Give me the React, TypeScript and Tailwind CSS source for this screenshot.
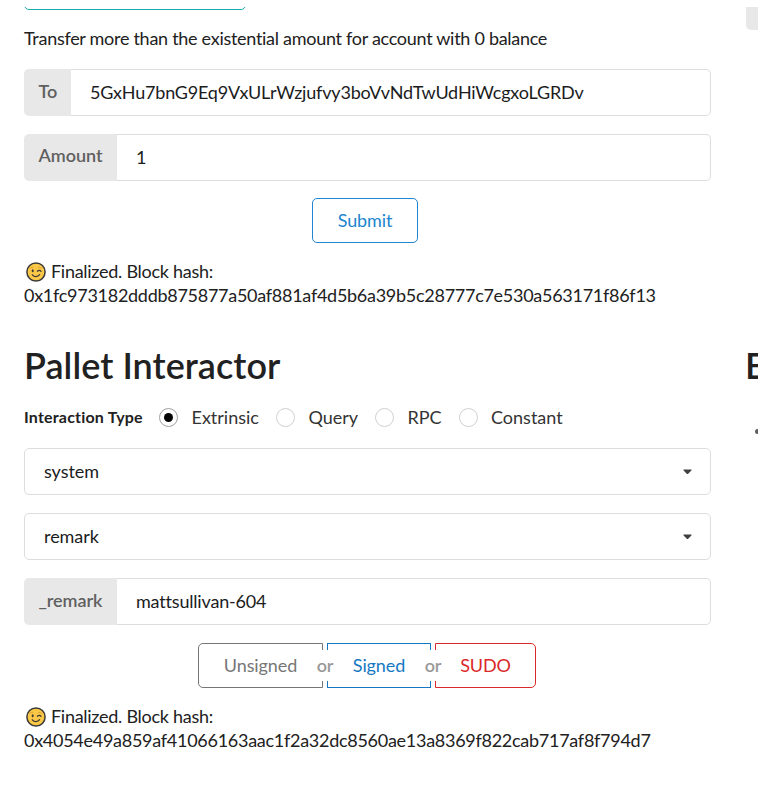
import React from 'react';

function Wink() {
  return (
    <svg viewBox="0 0 20 20" className="mt-[2px] mr-[5px] ml-[2px] h-5 w-5 shrink-0">
      <circle cx="10" cy="10" r="9.1" fill="#fac846" stroke="#3b3a39" strokeWidth="1.5" />
      <ellipse cx="6.7" cy="8.8" rx="1" ry="1.5" fill="#3b3a39" />
      <path d="M11.4 9.3c.8-1.2 2.8-1.2 3.7 0" fill="none" stroke="#3b3a39" strokeWidth="1.2" strokeLinecap="round" />
      <path d="M3.9 6.4c.7-1 1.7-1.3 2.8-1M12.4 5.5c1.2-.5 2.2-.1 3 .8" fill="none" stroke="#dc9c36" strokeWidth=".9" strokeLinecap="round" />
      <path d="M6.3 12.8c2 2.4 5.5 2.4 7.3-.1" fill="none" stroke="#3b3a39" strokeWidth="1.3" strokeLinecap="round" />
    </svg>
  );
}

function Field({ label, value, wide, labelTop = 'pt-[10px]' }: { label: string; value: string; wide?: boolean; labelTop?: string }) {
  return (
    <div className="mb-[18px] flex h-[47px] w-[687px]">
      <div className={`${wide ? 'w-[93px]' : 'w-[47px]'} ${labelTop} shrink-0 rounded-l-[5px] bg-[#e8e8e8] pl-[14.5px] text-[18px] leading-[24px] font-semibold tracking-[-0.05px] text-[#606060]`}>
        {label}
      </div>
      <div className="flex grow items-center rounded-r-[5px] border border-l-0 border-[#dcddde] pl-[19px] text-[18px] tracking-[-0.19px] text-[#1b1c1d]">
        {value}
      </div>
    </div>
  );
}

function Select({ value }: { value: string }) {
  return (
    <div className="mb-[18px] flex h-[47px] w-[687px] items-center justify-between rounded-[5px] border border-[#dcddde] pr-[18px] pl-[19px] text-[18px] tracking-[-0.05px] text-[#1b1c1d]">
      <span>{value}</span>
      <svg viewBox="0 0 9 6" className="h-[6px] w-[9px]">
        <path d="M.8 .5h7.4q.8.3.2.9L5 4.9q-.5.4-1 0L.6 1.4Q0 .8.8.5Z" fill="#404044" />
      </svg>
    </div>
  );
}

function Radio({ label, checked, gap }: { label: string; checked?: boolean; gap: string }) {
  return (
    <div className={`flex items-center ${gap}`}>
      <span className={`mr-[13.5px] flex h-[19px] w-[19px] items-center justify-center rounded-full border ${checked ? 'border-[#a0a0a0]' : 'border-[#d0d0d1]'}`}>
        {checked && <span className="h-[9px] w-[9px] rounded-full bg-[#050505]" />}
      </span>
      <span className="text-[18px] leading-6 text-[#333]">{label}</span>
    </div>
  );
}

function Status({ hash }: { hash: string }) {
  return (
    <div className="text-[18px] leading-6 tracking-[-0.275px] text-[#212121]">
      <div className="flex h-6 items-center"><Wink />Finalized. Block hash:</div>
      <div>{hash}</div>
    </div>
  );
}

function Or() {
  return (
    <div className="relative z-10 w-1">
      <span className="absolute top-[7px] -left-[12px] flex h-[31px] w-[28px] items-center justify-center bg-white text-[18px] font-semibold text-[#999]">or</span>
    </div>
  );
}

export default function App() {
  return (
    <div className="flex h-[787px] w-[758px] overflow-hidden bg-white pt-[7px] font-['Lato',sans-serif] whitespace-nowrap">
      <main className="ml-6 w-[687px] shrink-0">
        <div className="flex h-[3px] items-end overflow-hidden">
          <div className="h-10 w-[222px] shrink-0 rounded-[5px] border border-[#20a9ac]" />
        </div>
        <p className="mt-[16px] mb-[19px] text-[18px] leading-6 tracking-[-0.285px] text-[#212121]">Transfer more than the existential amount for account with 0 balance</p>
        <Field label="To" value="5GxHu7bnG9Eq9VxULrWzjufvy3boVvNdTwUdHiWcgxoLGRDv" />
        <Field label="Amount" value="1" wide labelTop="pt-[9px]" />
        <button className="mt-[-1px] mb-[16px] ml-[288px] block h-[45px] w-[106px] rounded-[5px] border border-[#2185d0] text-[18px] tracking-[-0.1px] text-[#2185d0]">Submit</button>
        <Status hash="0x1fc973182dddb875877a50af881af4d5b6a39b5c28777c7e530a563171f86f13" />
        <h1 className="mt-[35px] mb-[17px] text-[36px] leading-[46px] font-semibold tracking-[0.05px] text-[#212121]">Pallet Interactor</h1>
        <div className="mb-[19px] flex h-6 items-center">
          <span className="w-[135px] text-[16px] font-bold tracking-[0.2px] text-[#212121]">Interaction Type</span>
          <Radio label="Extrinsic" checked gap="w-[117px]" />
          <Radio label="Query" gap="w-[99px]" />
          <Radio label="RPC" gap="w-[83.5px]" />
          <Radio label="Constant" gap="" />
        </div>
        <Select value="system" />
        <Select value="remark" />
        <Field label="_remark" value="mattsullivan-604" wide />
        <div className="mb-[16px] ml-[174px] flex h-[45px] text-[18px] tracking-[-0.1px]">
          <button className="w-[125px] rounded-l-[5px] border border-[#767676] text-[#767676]">Unsigned</button>
          <Or />
          <button className="w-[104px] border border-[#1678c2] text-[#1678c2]">Signed</button>
          <Or />
          <button className="w-[101px] rounded-r-[5px] border border-[#db2828] text-[#db2828]">SUDO</button>
        </div>
        <Status hash="0x4054e49a859af41066163aac1f2a32dc8560ae13a8369f822cab717af8f794d7" />
      </main>
      <aside className="ml-[34px] w-[13px] shrink-0">
        <div className="ml-px h-[23px] w-10 rounded-bl-[5px] bg-[#e8e8e8]" />
        <h1 className="mt-[312px] text-[36px] leading-[46px] font-semibold text-[#212121]">E</h1>
        <div className="mt-[41px] ml-[10px] h-[5px] w-[5px] rounded-full bg-[#606060]" />
      </aside>
    </div>
  );
}
